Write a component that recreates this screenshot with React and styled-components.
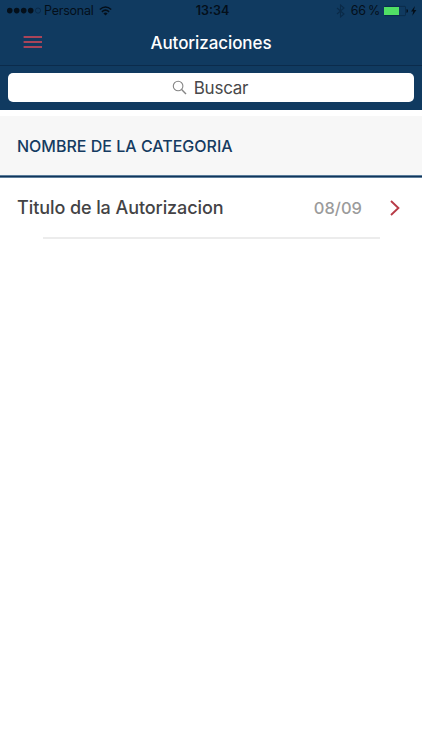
import React from "react";
import styled, { createGlobalStyle } from "styled-components";

const GlobalStyle = createGlobalStyle`
  *, *::before, *::after { box-sizing: border-box; }
  body { margin: 0; background: #fff; }
`;

const Screen = styled.div`
  display: flex;
  flex-direction: column;
  width: 100%;
  height: 750px;
  overflow: hidden;
  background: #fff;
  font-family: Inter, "Liberation Sans", sans-serif;
`;

const StatusBar = styled.div`
  display: grid;
  grid-template-columns: 1fr auto 1fr;
  align-items: center;
  height: 22px;
  padding: 0 4px 0 7px;
  background: #103a60;
  color: #040f1a;
  font-size: 12.5px;
  line-height: 22px;
  white-space: nowrap;
`;

const StatusGroup = styled.div`
  display: flex;
  align-items: center;
  justify-content: ${(p) => (p.$end ? "flex-end" : "flex-start")};
  svg { flex: none; display: block; }
`;

const Carrier = styled.span`
  margin: 0 6px 0 3px;
  font-size: 12.5px;
  letter-spacing: -0.25px;
`;

const Clock = styled.span`
  font-weight: 600;
  font-size: 12.5px;
  letter-spacing: 0;
`;

const Percent = styled.span`
  margin: 0 4px 0 6px;
  font-size: 12.5px;
  letter-spacing: -0.4px;
  word-spacing: -0.5px;
`;

const NavBar = styled.header`
  display: grid;
  grid-template-columns: 1fr auto 1fr;
  align-items: center;
  height: 44px;
  padding: 0 23px;
  background: #103a60;
  border-bottom: 1px solid #0b2b4b;
`;

const MenuButton = styled.button`
  display: flex;
  width: 20px;
  padding: 0;
  border: 0;
  background: none;
  margin-top: -3px;
`;

const Title = styled.h1`
  margin: 0 0 2px;
  color: #fff;
  font-size: 17px;
  line-height: 24px;
  font-weight: 500;
  letter-spacing: -0.08px;
`;

const SearchBar = styled.div`
  height: 44px;
  padding: 7px 8px 8px;
  background: #103a60;
`;

const SearchField = styled.div`
  display: flex;
  align-items: center;
  justify-content: center;
  gap: 7px;
  height: 29px;
  padding: 0 2px 0 0;
  border-radius: 5px;
  background: #fff;
  color: #48484a;
  font-size: 17px;
  letter-spacing: -0.25px;
`;

const CategoryHeader = styled.h2`
  display: flex;
  align-items: center;
  height: 62px;
  margin: 6px 0 0;
  padding: 0 17px 2px;
  background: #f7f7f7;
  box-shadow: inset 0 -1px #5f7f9b, inset 0 -2px #12355a, inset 0 -3px #5a7d9b;
  color: #153b61;
  font-size: 16px;
  font-weight: 500;
`;

const Row = styled.div`
  display: flex;
  align-items: center;
  height: 59px;
  padding: 0 22px 0 17px;
`;

const RowTitle = styled.span`
  flex: 1;
  color: #434345;
  font-size: 18px;
  font-weight: 500;
  letter-spacing: -0.08px;
`;

const RowDate = styled.span`
  margin-right: 28px;
  color: #9b9b9b;
  font-size: 16.5px;
  font-weight: 500;
`;

const Divider = styled.div`
  height: 2px;
  margin: 0 42px 0 43px;
  background: #ececec;
`;

const Signal = () => (
  <svg width="34" height="8" viewBox="0 0 34 8">
    {[2.7, 9.7, 16.7, 23.7].map((x) => (
      <circle key={x} cx={x} cy="3.6" r="2.8" fill="#040f1a" />
    ))}
    <circle cx="31" cy="3.6" r="2.6" fill="none" stroke="#072440" strokeWidth="0.7" />
  </svg>
);

const Wifi = () => (
  <svg width="13" height="10" viewBox="0 0 13 10">
    <g fill="none" stroke="#040f1a" strokeWidth="1.6">
      <path d="M.8 3.5Q6.5-1.5 12.2 3.5" />
      <path d="M2.9 5.8Q6.5 2.6 10.1 5.8" />
    </g>
    <path d="M4.4 7.4Q6.5 5.7 8.6 7.4L6.5 9.5Z" fill="#040f1a" />
  </svg>
);

const Bluetooth = () => (
  <svg width="9" height="14" viewBox="0 0 9 14">
    <path d="M1 4L8 10L4.5 13V1L8 4L1 10" fill="none" stroke="#0a2a48" strokeWidth="1.1" />
  </svg>
);

const Battery = () => (
  <svg width="34" height="12" viewBox="0 0 34 12">
    <rect x=".5" y="1.4" width="21" height="9.2" rx=".6" fill="none" stroke="#092742" strokeWidth=".7" />
    <rect x="0" y="2" width="15" height="8" fill="#50df65" />
    <path d="M22.5 4.3h.6q.9.3.9 1.7t-.9 1.7h-.6Z" fill="#040f1a" />
    <path d="M30.9 1L27 6.6h2.2l-.9 4.2 4.1-5.7h-2.4Z" fill="#040f1a" />
  </svg>
);

const Hamburger = () => (
  <svg width="20" height="14" viewBox="0 0 20 14">
    <path d="M.6 2H19M.6 7H19M.6 12H19" stroke="#a94459" strokeWidth="2" />
  </svg>
);

const Magnifier = () => (
  <svg width="15" height="15" viewBox="0 0 15 15">
    <g fill="none" stroke="#858585" strokeWidth="1.1">
      <circle cx="6.1" cy="6" r="4.8" />
      <path d="M9.6 9.6L14 14" strokeWidth="1.4" />
    </g>
  </svg>
);

const Chevron = () => (
  <svg width="10" height="16" viewBox="0 0 10 16">
    <path d="M1 1L8.4 8L1 15" fill="none" stroke="#b83b47" strokeWidth="1.9" />
  </svg>
);

export default function App() {
  return (
    <Screen>
      <GlobalStyle />
      <StatusBar>
        <StatusGroup>
          <Signal />
          <Carrier>Personal</Carrier>
          <Wifi />
        </StatusGroup>
        <Clock>13:34</Clock>
        <StatusGroup $end>
          <Bluetooth />
          <Percent>66 %</Percent>
          <Battery />
        </StatusGroup>
      </StatusBar>
      <NavBar>
        <MenuButton aria-label="Menu"><Hamburger /></MenuButton>
        <Title>Autorizaciones</Title>
      </NavBar>
      <SearchBar>
        <SearchField>
          <Magnifier />
          <span>Buscar</span>
        </SearchField>
      </SearchBar>
      <CategoryHeader>NOMBRE DE LA CATEGORIA</CategoryHeader>
      <Row>
        <RowTitle>Titulo de la Autorizacion</RowTitle>
        <RowDate>08/09</RowDate>
        <Chevron />
      </Row>
      <Divider />
    </Screen>
  );
}
